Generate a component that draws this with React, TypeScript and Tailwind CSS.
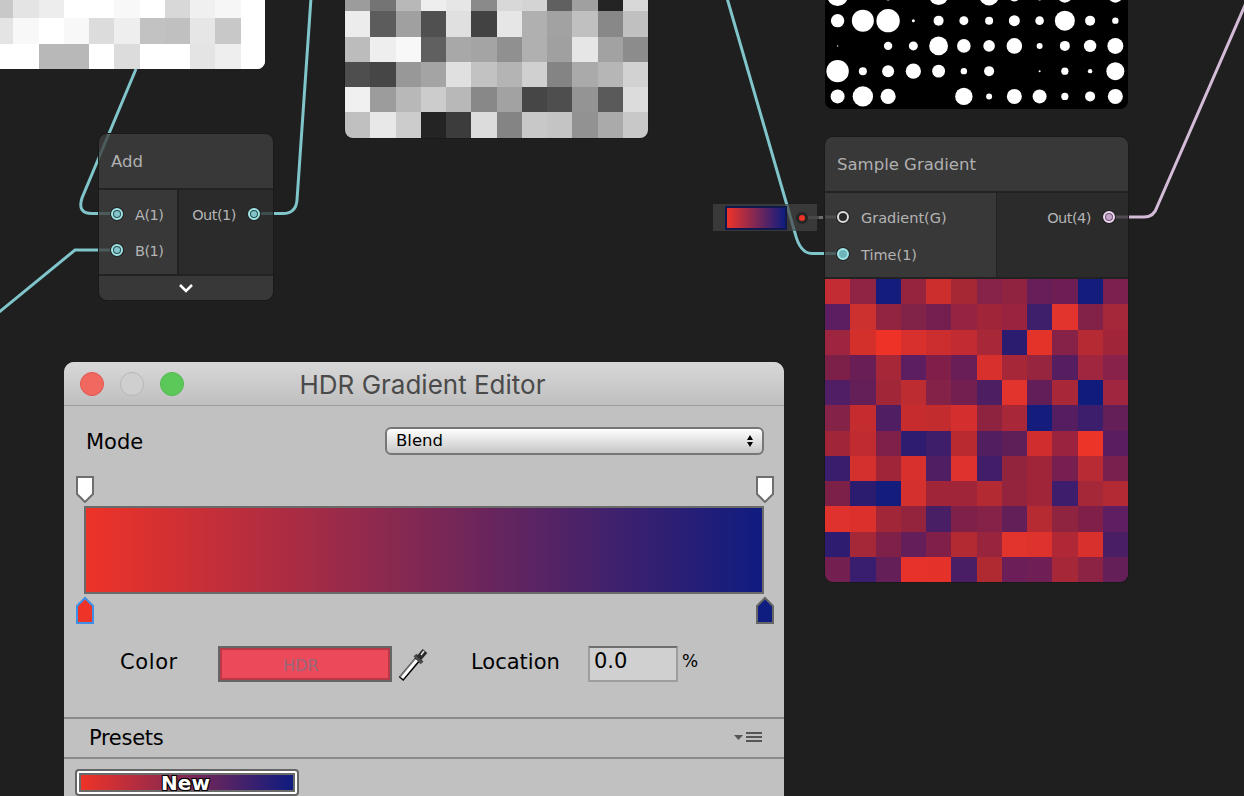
const leftGrid = [
  ["#c8c8c8","#e4e4e4","#ededed","#ffffff","#ffffff","#f8f8f8","#ffffff","#d8d8d8","#f0f0f0","#f6f6f6","#ffffff"],
  ["#e4e4e4","#f8f8f8","#ffffff","#f8f8f8","#dcdcdc","#eeeeee","#c2c2c2","#c0c0c0","#e6e6e6","#c8c8c8","#ffffff"],
  ["#ffffff","#ffffff","#b8b8b8","#b8b8b8","#ffffff","#dcdcdc","#ffffff","#ffffff","#e4e4e4","#eeeeee","#ffffff"],
];
const midGrid = [
  ["#9c9c9c","#747474","#b8b8b8","#eeeeee","#e6e6e6","#8a8a8a","#d8d8d8","#d4d4d4","#606060","#a0a0a0","#242424","#d8d8d8"],
  ["#ececec","#5c5c5c","#a0a0a0","#505050","#e0e0e0","#424242","#e6e6e6","#b0b0b0","#a2a2a2","#c0c0c0","#888888","#c0c0c0"],
  ["#bcbcbc","#eeeeee","#f8f8f8","#606060","#a8a8a8","#a4a4a4","#909090","#b0b0b0","#a0a0a0","#e6e6e6","#a2a2a2","#8c8c8c"],
  ["#4e4e4e","#464646","#989898","#a4a4a4","#e0e0e0","#c2c2c2","#b4b4b4","#d0d0d0","#848484","#aaaaaa","#b6b6b6","#d2d2d2"],
  ["#f0f0f0","#9c9c9c","#b8b8b8","#cccccc","#b8b8b8","#888888","#a2a2a2","#464646","#4e4e4e","#949494","#5a5a5a","#dcdcdc"],
  ["#c0c0c0","#e8e8e8","#cccccc","#242424","#3c3c3c","#dcdcdc","#848484","#c8c8c8","#c4c4c4","#929292","#aaaaaa","#c8c8c8"],
];
const colorGrid = [
  ["#c42c34","#8f2444","#141c7c","#97243f","#cc2e2d","#a62835","#872248","#90233f","#661f58","#6f1e54","#141c7c","#7c2050"],
  ["#5c1e60","#cc302f","#932440","#812248","#741f50","#962440","#a02539","#9a2440","#3e1f6c","#e2332c","#822248","#a4283a"],
  ["#9e2540","#d3302c","#ee3228","#d8302c","#cc2e30","#c22b32","#a82838","#2b1c70","#e4342a","#862248","#b62a34","#a02538"],
  ["#7c2048","#691e55","#a62838","#5c1e60","#821f48","#6a1e58","#d8302c","#a62838","#982540","#541e60","#a02640","#88224a"],
  ["#501e65","#641e58","#a02638","#bc2c30","#852248","#732050","#4e1e62","#e2332c","#621e58","#a82838","#101c7c","#a02640"],
  ["#842248","#c42c30","#501f63","#c62c2e","#c22c2e","#d42e2e","#8e2340","#a8283a","#141c7c","#551e60","#3c1e6c","#641e58"],
  ["#a02538","#c02b30","#7e2048","#2e1c70","#3e1e6a","#b82a30","#521e60","#5e1e58","#d02e2e","#9a2440","#ec3428","#5a1e60"],
  ["#3a1d6c","#d4302e","#a02538","#d8302c","#501f63","#e0322c","#421d68","#92243e","#a02538","#761f50","#b82a34","#7a204e"],
  ["#7c2048","#2c1c70","#141c7c","#d4302e","#a02538","#a02538","#b42a32","#94243e","#a02538","#3e1e6c","#a42838","#b42a34"],
  ["#e0322c","#dc302c","#a02638","#94243e","#481e64","#7e2048","#862248","#621f58","#b62a32","#8e2440","#802048","#5e1e60"],
  ["#2e1c70","#a42838","#7e2048","#641e5a","#802048","#b42a32","#98243e","#e2332c","#de322c","#b02836","#d8302c","#4a1e64"],
  ["#731f50","#391d6e","#651f58","#e6322a","#e4322a","#4a1e64","#b02a32","#6c1e58","#6f1f54","#a62838","#8c2244","#651f58"],
];
const dots = [
  [10.6,0,5,0,9.6,0,10,6,5,7.3,0,7.3],
  [6.7,11,11.7,1.5,5,4.5,4,5.5,4.3,10,5,3.2],
  [0.7,0,4.2,4.5,9.4,6.8,5.8,7.8,3,5,6.2,8],
  [11.2,4,6,7.6,6.4,3.2,5,0,1,3.6,2.2,9],
  [7,10.2,7.6,0,0,8.7,3,7.5,7,3.6,5,7.5],
];

function Cells({ rows, cols }: { rows: string[][]; cols: number }) {
  return (
    <div className="grid auto-rows-[25.25px]" style={{ gridTemplateColumns: `repeat(${cols}, 25.25px)` }}>
      {rows.flat().map((c, i) => (
        <div key={i} style={{ backgroundColor: c }} />
      ))}
    </div>
  );
}

function Port({ ring, gap, dot }: { ring: string; gap: string; dot: string }) {
  return (
    <span
      className="w-[12px] h-[12px] rounded-full border-2 shrink-0 shadow-[0_0_0_1px_#222222] flex items-center justify-center"
      style={{ borderColor: ring, backgroundColor: gap }}
    >
      <span className="block w-[6px] h-[6px] rounded-full" style={{ backgroundColor: dot }} />
    </span>
  );
}

const CYAN = { ring: "#9ee6e8", gap: "#2f4a4c", dot: "#7fc5ca" };

function Label({ children, tight }: { children: string; tight?: boolean }) {
  return (
    <span className={tight ? "text-[14.5px] leading-none text-[#b4b4b4] pt-[2px] tracking-[-0.5px]" : "text-[14.5px] leading-none text-[#b4b4b4] pt-[2px]"}>
      {children}
    </span>
  );
}

function TopMarker() {
  return (
    <svg width="18" height="27" viewBox="0 0 18 27">
      <path d="M1 1H17V18L9 26L1 18Z" fill="#ffffff" stroke="#6e6e6e" strokeWidth="2" />
    </svg>
  );
}

function BottomMarker({ fill, stroke }: { fill: string; stroke: string }) {
  return (
    <svg width="18" height="28" viewBox="0 0 18 28">
      <path d="M1 27H17V10L9 2L1 10Z" fill={fill} stroke={stroke} strokeWidth="2" />
    </svg>
  );
}

export default function App() {
  return (
    <div className="relative w-[1244px] h-[796px] overflow-hidden bg-[#1f1f1f] font-['DejaVu_Sans',sans-serif]">
      <svg className="absolute inset-0" width="1244" height="796" fill="none">
        <g stroke="#7fc5ca" strokeWidth="3">
          <path d="M136 69L82 198Q77 213.500 92 213.500H117" />
          <path d="M-2 313L75 250H117" />
          <path d="M254 213.500H283Q296 213.500 297 200L311 -2" />
          <path d="M727 -2L795 233Q800 253.500 812 253.500H843" />
        </g>
        <path d="M825 217H840" stroke="#8a8a8a" strokeWidth="3" />
        <path d="M1109 217H1144Q1154 217 1157 207L1246 3" stroke="#d4bcd8" strokeWidth="3" />
      </svg>

      {/* left preview */}
      <div className="absolute left-0 top-[-7px] w-[265px] h-[76px] bg-white rounded-br-lg overflow-hidden">
        <div className="ml-[-12px]">
          <Cells rows={leftGrid} cols={11} />
        </div>
      </div>

      {/* middle preview */}
      <div className="absolute left-[345px] top-[-14px] w-[303px] h-[152px] rounded-b-lg overflow-hidden shadow-[0_0_0_1px_#1a1a1a]">
        <Cells rows={midGrid} cols={12} />
      </div>

      {/* dots preview */}
      <div className="absolute left-[825px] top-[-17px] w-[303px] h-[126px] rounded-b-lg overflow-hidden bg-black">
        <svg width="303" height="126" className="block blur-[0.7px]">
          {dots.flatMap((row, y) =>
            row.map((r, x) =>
              r > 0 ? <circle key={`${x}-${y}`} cx={12.6 + x * 25.25} cy={12.4 + y * 25.25} r={r} fill="#ffffff" /> : null,
            ),
          )}
        </svg>
      </div>

      {/* Add node */}
      <div className="absolute left-[99px] top-[134px] w-[174px] rounded-lg overflow-hidden flex flex-col shadow-[0_0_0_1px_#1a1a1a]">
        <div className="h-[54px] bg-[#3e3e3e]/80 flex items-center pl-[12px] pt-[2px] text-[16.500px] text-[#b0b0b0]">Add</div>
        <div className="h-[2px] bg-[#222222]" />
        <div className="flex h-[84px]">
          <div className="w-[78px] bg-[#3e3e3e]/80 flex flex-col gap-[24px] pt-[18px] pl-[12px]">
            <div className="flex items-center gap-[12px] h-[12px]"><Port {...CYAN} /><Label tight>A(1)</Label></div>
            <div className="flex items-center gap-[12px] h-[12px]"><Port {...CYAN} /><Label tight>B(1)</Label></div>
          </div>
          <div className="w-[2px] bg-[#222222]" />
          <div className="flex-1 bg-[#2e2e2e]/80 flex justify-end items-start gap-[12px] pt-[18px] pr-[13px]">
            <div className="flex items-center gap-[12px] h-[12px]"><Label tight>Out(1)</Label><Port {...CYAN} /></div>
          </div>
        </div>
        <div className="h-[2px] bg-[#222222]" />
        <div className="h-[24px] bg-[#3e3e3e]/80 flex items-center justify-center">
          <svg width="16" height="10" viewBox="0 0 16 10" fill="none"><path d="M2 2L8 8L14 2" stroke="#ffffff" strokeWidth="2.500" /></svg>
        </div>
      </div>

      {/* Gradient property */}
      <div className="absolute left-[713px] top-[204px] w-[104px] h-[27px] bg-[#444444]/70 flex items-center pl-[12px]">
        <div className="w-[62px] h-[24px] border-2 border-[#101850] bg-linear-to-r/srgb from-[#ee3328] to-[#0f1c80]" />
        <div className="ml-[9px] w-[12px] h-[12px] rounded-full bg-[#262626] flex items-center justify-center">
          <div className="w-[6px] h-[6px] rounded-full bg-[#ee3328]" />
        </div>
      </div>
      <svg className="absolute left-[808px] top-[216px]" width="16" height="3">
        <rect x="0" width="11" height="3" fill="#484848" />
        <rect x="11" width="4" height="3" fill="#6e6e6e" />
      </svg>

      {/* Sample Gradient node */}
      <div className="absolute left-[825px] top-[137px] w-[303px] rounded-lg overflow-hidden flex flex-col shadow-[0_0_0_1px_#1a1a1a]">
        <div className="h-[54px] bg-[#3e3e3e]/80 flex items-center pl-[12px] pt-[2px] text-[16.500px] text-[#b0b0b0]">Sample Gradient</div>
        <div className="h-[2px] bg-[#222222]" />
        <div className="flex h-[84px]">
          <div className="w-[171px] bg-[#3e3e3e]/80 flex flex-col gap-[25px] pt-[18px] pl-[12px]">
            <div className="flex items-center gap-[12px] h-[12px]"><Port ring="#dcdcdc" gap="#2a2a2a" dot="#2a2a2a" /><Label>Gradient(G)</Label></div>
            <div className="flex items-center gap-[12px] h-[12px]"><Port ring="#9ee6e8" gap="#6fb6ba" dot="#6fb6ba" /><Label>Time(1)</Label></div>
          </div>
          <div className="w-[1px] bg-[#222222]" />
          <div className="flex-1 bg-[#2e2e2e]/80 flex justify-end items-start pt-[18px] pr-[13px]">
            <div className="flex items-center gap-[12px] h-[12px]"><Label tight>Out(4)</Label><Port ring="#f0d4f4" gap="#6a5a6c" dot="#c4a4c8" /></div>
          </div>
        </div>
        <div className="h-[2px] bg-[#222222]" />
        <Cells rows={colorGrid} cols={12} />
      </div>

      {/* Window */}
      <div className="absolute left-[64px] top-[362px] w-[720px] h-[434px] rounded-t-[10px] overflow-hidden bg-[#c1c1c1] flex flex-col text-black">
        <div className="relative h-[43px] shrink-0 bg-linear-to-b/srgb from-[#d8d8d8] to-[#bfbfbf] flex items-center gap-[16px] pl-[16px]">
          <span className="w-[24px] h-[24px] rounded-full bg-[#f0685f] border border-[#e2544c]" />
          <span className="w-[24px] h-[24px] rounded-full bg-[#cfcfcf] border border-[#b8b8b8]" />
          <span className="w-[24px] h-[24px] rounded-full bg-[#5cc85a] border border-[#4eb94c]" />
          <span className="absolute inset-x-0 top-0 h-[43px] pt-[2px] pr-[3px] flex items-center justify-center font-['Inter',sans-serif] text-[26px] text-[#4a4a4a]">HDR Gradient Editor</span>
        </div>
        <div className="h-[1px] shrink-0 bg-[#9c9c9c]" />
        <div className="flex items-center justify-between pl-[22px] pr-[20px] mt-[21px] h-[28px]">
          <span className="text-[21px] leading-[30px] h-[28px]">Mode</span>
          <div className="w-[379px] h-[28px] rounded-[6px] border-2 border-[#777777] bg-linear-to-b/srgb from-[#ffffff] to-[#c6c6c6] flex items-center justify-between pl-[9px] pr-[8px]">
            <span className="text-[16.500px] pt-[1px]">Blend</span>
            <svg width="8" height="14" viewBox="0 0 8 14"><path d="M4 1L7 6H1Z M4 13L7 8H1Z" fill="#000000" /></svg>
          </div>
        </div>
        <div className="flex justify-between pl-[12px] pr-[10px] mt-[21px] h-[27px]">
          <TopMarker /><TopMarker />
        </div>
        <div className="mx-[20px] mt-[3px] h-[88px] border-2 border-[#6a6a6a] bg-linear-to-r/srgb from-[#ee3328] to-[#0f1c80]" />
        <div className="flex justify-between pl-[12px] pr-[10px] mt-[2px] h-[28px]">
          <BottomMarker fill="#ee3328" stroke="#3d8fe8" />
          <BottomMarker fill="#0f1c80" stroke="#666666" />
        </div>
        <div className="flex items-center pl-[56px] mt-[22px] h-[36px]">
          <span className="w-[98px] text-[21px] leading-none mt-[-4px] tracking-[0.6px]">Color</span>
          <div className="w-[174px] h-[36px] border-2 border-[#666666]">
            <div className="w-full h-full border-2 border-[#b83a48] bg-[#ec4a5a] flex items-center justify-center text-[16px] text-[#96687a] pt-[3px] pr-[8px]">HDR</div>
          </div>
          <svg className="ml-[6px] shrink-0" width="30" height="36" viewBox="0 0 30 36" fill="none">
            <path d="M3 33L20 13" stroke="#000000" strokeWidth="6" />
            <path d="M2 31L17 13" stroke="#7a7a7a" strokeWidth="1.500" />
            <path d="M4 32L19 14" stroke="#ffffff" strokeWidth="3" />
            <path d="M17 9L24 17" stroke="#4a4a4a" strokeWidth="4" />
            <path d="M21 12L27 5" stroke="#2a2a2a" strokeWidth="6" />
            <path d="M23 9L26 5" stroke="#e4e4e4" strokeWidth="1.500" />
          </svg>
          <span className="ml-[43px] w-[117px] text-[21px] leading-none mt-[-4px]">Location</span>
          <div className="w-[90px] h-[36px] border-2 border-[#9e9e9e] border-t-[#6e6e6e] bg-[#d0d0d0] flex items-center pl-[4px] text-[21px] leading-none pb-[5px] shrink-0">0.0</div>
          <span className="ml-[4px] text-[17px] leading-none mt-[-5px]">%</span>
        </div>
        <div className="h-[2px] shrink-0 bg-[#8a8a8a] mt-[35px]" />
        <div className="h-[38px] shrink-0 flex items-center justify-between pl-[25px] pr-[22px]">
          <span className="text-[21px] leading-none pt-[1px] tracking-[-0.3px]">Presets</span>
          <svg width="28" height="12" viewBox="0 0 28 12">
            <path d="M0 3H9L4.500 8Z" fill="#555555" />
            <path d="M12 1H28M12 5H28M12 9H28" stroke="#555555" strokeWidth="2" />
          </svg>
        </div>
        <div className="h-[2px] shrink-0 bg-[#8a8a8a]" />
        <div className="ml-[11px] mt-[10px] w-[224px] h-[27px] shrink-0 rounded-[4px] border-2 border-[#666666] bg-white p-[2px]">
          <div className="relative h-full border-2 border-[#6a6a6a] bg-linear-to-r/srgb from-[#ee3328] to-[#0f1c80] flex items-center justify-center">
            <span className="text-[20px] leading-none font-bold text-white pr-[3px] [text-shadow:-1px_-1px_0_#000,1px_-1px_0_#000,-1px_1px_0_#000,1px_1px_0_#000]">New</span>
          </div>
        </div>
      </div>
    </div>
  );
}
